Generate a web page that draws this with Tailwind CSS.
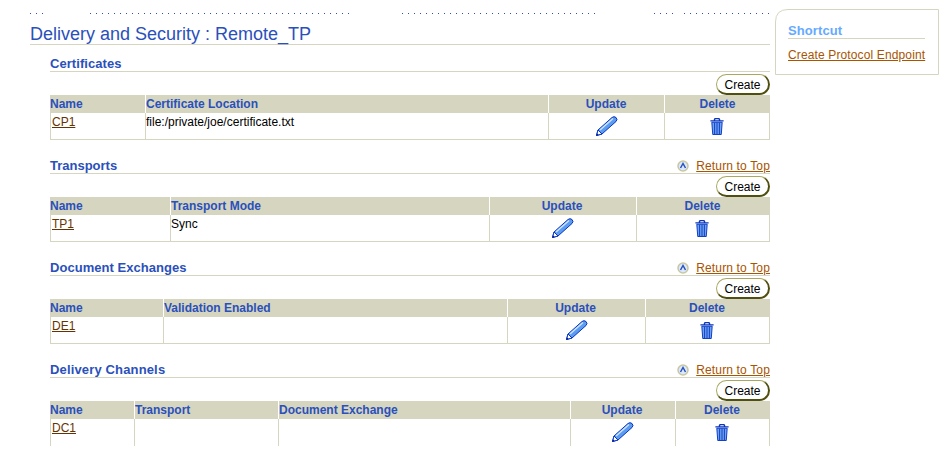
<!DOCTYPE html>
<html><head><meta charset="utf-8"><script src="https://cdn.jsdelivr.net/npm/@tailwindcss/browser@4"></script></head>
<body class="bg-white">
<div class="relative w-[950px] h-[472px] overflow-hidden bg-white font-['Liberation_Sans',Arial,sans-serif] text-[12px] text-black">

  <svg class="absolute left-[775px] top-[9px]" width="164" height="66"><path d="M0.5 65.5V13Q0.5 0.5 13 0.5H163.5V65.5Z" fill="#fff" stroke="#d6d5c0"/></svg>
  <div class="absolute left-[788px] top-[23px] w-[137px]">
    <div class="h-[16px] border-b border-[#d6d5c0] text-[13px] leading-[15px] font-bold tracking-[0.1px] text-[#66aaff]">Shortcut</div>
    <a class="block mt-[9px] text-[#a85400] underline leading-[14px] tracking-[0.13px] whitespace-nowrap">Create Protocol Endpoint</a>
  </div>

  <div class="pl-[30px] w-[770px]">
    <div class="h-[24px] pt-[13px] flex items-start">
      <div class="h-px w-[18px] bg-[repeating-linear-gradient(90deg,#2a50bb_0_1px,transparent_1px_6px)]"></div>
      <div class="h-px ml-[42px] w-[264px] bg-[repeating-linear-gradient(90deg,#2a50bb_0_1px,transparent_1px_6px)]"></div>
      <div class="h-px ml-[48px] w-[198px] bg-[repeating-linear-gradient(90deg,#2a50bb_0_1px,transparent_1px_6px)]"></div>
      <div class="h-px ml-[54px] w-[24px] bg-[repeating-linear-gradient(90deg,#2a50bb_0_1px,transparent_1px_6px)]"></div>
      <div class="h-px ml-[6px] w-[86px] bg-[repeating-linear-gradient(90deg,#2a50bb_0_1px,transparent_1px_6px)]"></div>
    </div>
    <h1 class="h-[21px] border-b border-[#d6d5c0] text-[18px] leading-[20px] text-[#2a50bb]">Delivery and Security : Remote_TP</h1>

    <div class="pl-[20px]">
      <section class="h-[95px] mt-[10px]">
        <div class="h-[17px] border-b border-[#d6d5c0] flex justify-between items-start"><h2 class="pt-[1px] text-[13px] leading-[16px] font-bold tracking-[0.06px] text-[#2a50bb]">Certificates</h2></div>
        <div class="h-[23px] flex justify-end pt-[2px]"><button class="h-[21px] w-[54px] pt-[2px] rounded-[11px] border border-[#a8a860] border-r-2 border-b-2 border-r-[#4f4f10] border-b-[#4f4f10] text-[12px] leading-[16px]">Create</button></div>
        <div class="grid grid-cols-[96px_403px_116px_105px] grid-rows-[18px_27px]">
          <div class="bg-[#d6d5c0] border-r border-white font-bold text-[#2a50bb] leading-[18px]">Name</div>
          <div class="bg-[#d6d5c0] border-r border-white font-bold text-[#2a50bb] leading-[18px]">Certificate Location</div>
          <div class="text-center pr-[1px] bg-[#d6d5c0] border-r border-white font-bold text-[#2a50bb] leading-[18px]">Update</div>
          <div class="text-center bg-[#d6d5c0] font-bold text-[#2a50bb] leading-[18px]">Delete</div>
          <div class="pl-[1px] pt-[2px] border-x border-b border-[#d6d5c0] leading-[14px]"><a class="text-[#663300] underline">CP1</a></div>
          <div class="pt-[2px] border-r border-b border-[#d6d5c0] leading-[14px]">file:/private/joe/certificate.txt</div>
          <div class="flex justify-center pt-[2px] border-r border-b border-[#d6d5c0]"><svg width="24" height="22" viewBox="0 0 24 22"><path d="M1.5 20.5 3 15 17 2.5Q19 .8 21 2.5 23 4.5 21 6.5L7 19Z" fill="#5a9cf0" stroke="#0a35c0"/><path d="M3 15 7 19 1.5 20.5Z" fill="#fff" stroke="#0a35c0"/><path d="M5 15 18 3.5" stroke="#cfe3ff" stroke-width="1.5"/><path d="M1.5 20.5 3 19" stroke="#0a2090" stroke-width="1.5"/></svg></div>
          <div class="flex justify-center pt-[5px] border-r border-b border-[#d6d5c0]"><svg width="14" height="17" viewBox="0 0 14 18"><path d="M0 3H14M4 2.5 5 .5H9L10 2.5" fill="none" stroke="#0a35c0" stroke-width="1.5"/><path d="M1.5 4.5H12.5L11.5 17.5H2.5Z" fill="#6ea4f2" stroke="#0a35c0"/><path d="M4.500 5V17M7 5V17M9.500 5V17" stroke="#0a35c0"/></svg></div>
        </div>
      </section>

      <section class="mt-[7px] h-[95px]">
        <div class="h-[17px] border-b border-[#d6d5c0] flex justify-between items-start"><h2 class="pt-[1px] text-[13px] leading-[16px] font-bold tracking-[0.0px] text-[#2a50bb]">Transports</h2><div class="flex items-center gap-[7px] leading-[14px] pt-[2px]"><svg width="12" height="12" viewBox="0 0 12 12"><circle cx="6" cy="6" r="5" fill="#dbe8ff" stroke="#c8c7a0" stroke-width="1.500"/><path d="M3.500 8 6 3.500 8.500 8" fill="none" stroke="#2a50bb" stroke-width="1.500"/></svg><a class="text-[#a85400] underline tracking-[0.15px]">Return to Top</a></div></div>
        <div class="h-[23px] flex justify-end pt-[2px]"><button class="h-[21px] w-[54px] pt-[2px] rounded-[11px] border border-[#a8a860] border-r-2 border-b-2 border-r-[#4f4f10] border-b-[#4f4f10] text-[12px] leading-[16px]">Create</button></div>
        <div class="grid grid-cols-[121px_319px_147px_133px] grid-rows-[18px_27px]">
          <div class="bg-[#d6d5c0] border-r border-white font-bold text-[#2a50bb] leading-[18px]">Name</div>
          <div class="bg-[#d6d5c0] border-r border-white font-bold text-[#2a50bb] leading-[18px]">Transport Mode</div>
          <div class="text-center pr-[2px] bg-[#d6d5c0] border-r border-white font-bold text-[#2a50bb] leading-[18px]">Update</div>
          <div class="text-center pr-[2px] bg-[#d6d5c0] font-bold text-[#2a50bb] leading-[18px]">Delete</div>
          <div class="pl-[1px] pt-[2px] border-x border-b border-[#d6d5c0] leading-[14px]"><a class="text-[#663300] underline">TP1</a></div>
          <div class="pt-[2px] border-r border-b border-[#d6d5c0] leading-[14px]">Sync</div>
          <div class="flex justify-center pt-[2px] border-r border-b border-[#d6d5c0]"><svg width="24" height="22" viewBox="0 0 24 22"><path d="M1.5 20.5 3 15 17 2.5Q19 .8 21 2.5 23 4.5 21 6.5L7 19Z" fill="#5a9cf0" stroke="#0a35c0"/><path d="M3 15 7 19 1.5 20.5Z" fill="#fff" stroke="#0a35c0"/><path d="M5 15 18 3.5" stroke="#cfe3ff" stroke-width="1.5"/><path d="M1.5 20.5 3 19" stroke="#0a2090" stroke-width="1.5"/></svg></div>
          <div class="flex justify-center pr-[2px] pt-[5px] border-r border-b border-[#d6d5c0]"><svg width="14" height="17" viewBox="0 0 14 18"><path d="M0 3H14M4 2.5 5 .5H9L10 2.5" fill="none" stroke="#0a35c0" stroke-width="1.5"/><path d="M1.5 4.5H12.5L11.5 17.5H2.5Z" fill="#6ea4f2" stroke="#0a35c0"/><path d="M4.500 5V17M7 5V17M9.500 5V17" stroke="#0a35c0"/></svg></div>
        </div>
      </section>

      <section class="mt-[7px] h-[95px]">
        <div class="h-[17px] border-b border-[#d6d5c0] flex justify-between items-start"><h2 class="pt-[1px] text-[13px] leading-[16px] font-bold tracking-[0.04px] text-[#2a50bb]">Document Exchanges</h2><div class="flex items-center gap-[7px] leading-[14px] pt-[2px]"><svg width="12" height="12" viewBox="0 0 12 12"><circle cx="6" cy="6" r="5" fill="#dbe8ff" stroke="#c8c7a0" stroke-width="1.500"/><path d="M3.500 8 6 3.500 8.500 8" fill="none" stroke="#2a50bb" stroke-width="1.500"/></svg><a class="text-[#a85400] underline tracking-[0.15px]">Return to Top</a></div></div>
        <div class="h-[23px] flex justify-end pt-[2px]"><button class="h-[21px] w-[54px] pt-[2px] rounded-[11px] border border-[#a8a860] border-r-2 border-b-2 border-r-[#4f4f10] border-b-[#4f4f10] text-[12px] leading-[16px]">Create</button></div>
        <div class="grid grid-cols-[114px_344px_138px_124px] grid-rows-[18px_27px]">
          <div class="bg-[#d6d5c0] border-r border-white font-bold text-[#2a50bb] leading-[18px]">Name</div>
          <div class="bg-[#d6d5c0] border-r border-white font-bold text-[#2a50bb] leading-[18px]">Validation Enabled</div>
          <div class="text-center pr-[2px] bg-[#d6d5c0] border-r border-white font-bold text-[#2a50bb] leading-[18px]">Update</div>
          <div class="text-center pr-[2px] bg-[#d6d5c0] font-bold text-[#2a50bb] leading-[18px]">Delete</div>
          <div class="pl-[1px] pt-[2px] border-x border-b border-[#d6d5c0] leading-[14px]"><a class="text-[#663300] underline">DE1</a></div>
          <div class="border-r border-b border-[#d6d5c0]"></div>
          <div class="flex justify-center pt-[2px] border-r border-b border-[#d6d5c0]"><svg width="24" height="22" viewBox="0 0 24 22"><path d="M1.5 20.5 3 15 17 2.5Q19 .8 21 2.5 23 4.5 21 6.5L7 19Z" fill="#5a9cf0" stroke="#0a35c0"/><path d="M3 15 7 19 1.5 20.5Z" fill="#fff" stroke="#0a35c0"/><path d="M5 15 18 3.5" stroke="#cfe3ff" stroke-width="1.5"/><path d="M1.5 20.5 3 19" stroke="#0a2090" stroke-width="1.5"/></svg></div>
          <div class="flex justify-center pr-[2px] pt-[5px] border-r border-b border-[#d6d5c0]"><svg width="14" height="17" viewBox="0 0 14 18"><path d="M0 3H14M4 2.5 5 .5H9L10 2.5" fill="none" stroke="#0a35c0" stroke-width="1.5"/><path d="M1.5 4.5H12.5L11.5 17.5H2.5Z" fill="#6ea4f2" stroke="#0a35c0"/><path d="M4.500 5V17M7 5V17M9.500 5V17" stroke="#0a35c0"/></svg></div>
        </div>
      </section>

      <section class="mt-[7px]">
        <div class="h-[17px] border-b border-[#d6d5c0] flex justify-between items-start"><h2 class="pt-[1px] text-[13px] leading-[16px] font-bold tracking-[0.15px] text-[#2a50bb]">Delivery Channels</h2><div class="flex items-center gap-[7px] leading-[14px] pt-[2px]"><svg width="12" height="12" viewBox="0 0 12 12"><circle cx="6" cy="6" r="5" fill="#dbe8ff" stroke="#c8c7a0" stroke-width="1.500"/><path d="M3.500 8 6 3.500 8.500 8" fill="none" stroke="#2a50bb" stroke-width="1.500"/></svg><a class="text-[#a85400] underline tracking-[0.15px]">Return to Top</a></div></div>
        <div class="h-[23px] flex justify-end pt-[2px]"><button class="h-[21px] w-[54px] pt-[2px] rounded-[11px] border border-[#a8a860] border-r-2 border-b-2 border-r-[#4f4f10] border-b-[#4f4f10] text-[12px] leading-[16px]">Create</button></div>
        <div class="grid grid-cols-[85px_144px_292px_105px_94px] grid-rows-[18px_27px]">
          <div class="bg-[#d6d5c0] border-r border-white font-bold text-[#2a50bb] leading-[18px]">Name</div>
          <div class="bg-[#d6d5c0] border-r border-white font-bold text-[#2a50bb] leading-[18px]">Transport</div>
          <div class="bg-[#d6d5c0] border-r border-white font-bold text-[#2a50bb] leading-[18px]">Document Exchange</div>
          <div class="text-center pr-[2px] bg-[#d6d5c0] border-r border-white font-bold text-[#2a50bb] leading-[18px]">Update</div>
          <div class="text-center pr-[2px] bg-[#d6d5c0] font-bold text-[#2a50bb] leading-[18px]">Delete</div>
          <div class="pl-[1px] pt-[2px] border-x border-[#d6d5c0] leading-[14px]"><a class="text-[#663300] underline">DC1</a></div>
          <div class="border-r border-[#d6d5c0]"></div>
          <div class="border-r border-[#d6d5c0]"></div>
          <div class="flex justify-center pt-[2px] border-r border-[#d6d5c0]"><svg width="24" height="22" viewBox="0 0 24 22"><path d="M1.5 20.5 3 15 17 2.5Q19 .8 21 2.5 23 4.5 21 6.5L7 19Z" fill="#5a9cf0" stroke="#0a35c0"/><path d="M3 15 7 19 1.5 20.5Z" fill="#fff" stroke="#0a35c0"/><path d="M5 15 18 3.5" stroke="#cfe3ff" stroke-width="1.5"/><path d="M1.5 20.5 3 19" stroke="#0a2090" stroke-width="1.5"/></svg></div>
          <div class="flex justify-center pr-[2px] pt-[5px] border-r border-[#d6d5c0]"><svg width="14" height="17" viewBox="0 0 14 18"><path d="M0 3H14M4 2.5 5 .5H9L10 2.5" fill="none" stroke="#0a35c0" stroke-width="1.5"/><path d="M1.5 4.5H12.5L11.5 17.5H2.5Z" fill="#6ea4f2" stroke="#0a35c0"/><path d="M4.500 5V17M7 5V17M9.500 5V17" stroke="#0a35c0"/></svg></div>
        </div>
      </section>
    </div>
  </div>
</div>
</body></html>
